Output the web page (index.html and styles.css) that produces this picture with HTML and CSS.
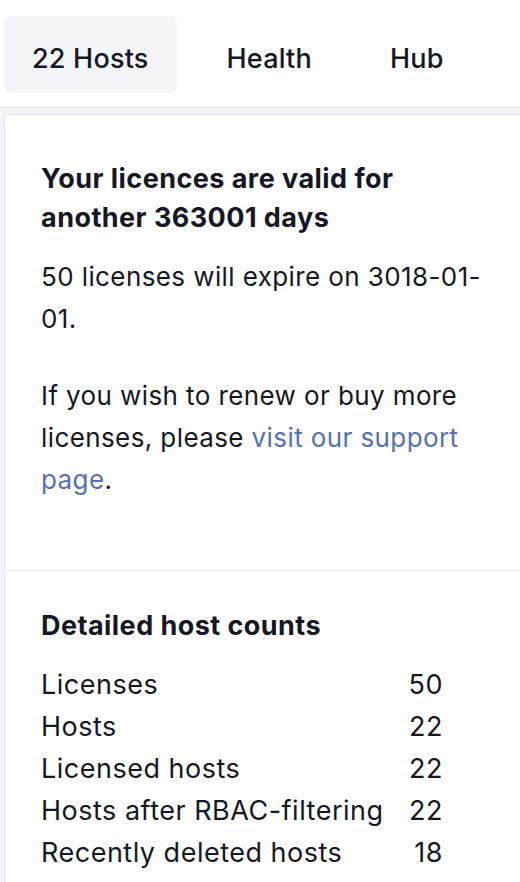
FILE: index.html
```html
<!DOCTYPE html>
<html lang="en">
<head>
<meta charset="utf-8">
<title>Licences</title>
<link rel="stylesheet" href="styles.css">
</head>
<body>
<nav class="tabs">
  <div class="tab active">22 Hosts</div>
  <div class="tab">Health</div>
  <div class="tab">Hub</div>
</nav>
<main class="content">
  <section class="card">
    <div class="card-section">
      <h2 class="title">Your licences are valid for another 363001 days</h2>
      <p class="text">50 licenses will expire on 3018-01-01.</p>
      <p class="text">If you wish to renew or buy more licenses, please <a class="link" href="#">visit our support page</a>.</p>
    </div>
    <div class="card-section second">
      <h2 class="title">Detailed host counts</h2>
      <div class="counts">
        <span class="label">Licenses</span><span class="num">50</span>
        <span class="label">Hosts</span><span class="num">22</span>
        <span class="label">Licensed hosts</span><span class="num">22</span>
        <span class="label">Hosts after RBAC-filtering</span><span class="num">22</span>
        <span class="label">Recently deleted hosts</span><span class="num">18</span>
      </div>
    </div>
  </section>
</main>
</body>
</html>
```
FILE: styles.css
```css
html, body {
  margin: 0;
  padding: 0;
}
body {
  font-family: Inter, "Noto Sans", sans-serif;
  color: #151824;
  background: #f3f4f8;
  width: 520px;
  height: 882px;
  overflow: hidden;
  display: flex;
  flex-direction: column;
}
.tabs {
  display: flex;
  gap: 22px;
  background: #ffffff;
  padding: 16px 0 14px 4px;
  border-bottom: 1px solid #e4e6ed;
}
.tab {
  padding: 28px 28px 19px 28px;
  font-size: 27px;
  line-height: 30px;
  letter-spacing: 0.2px;
  font-weight: 500;
  border-radius: 7px;
}
.tab.active {
  background: #f3f5f9;
}
.content {
  flex: 1;
  display: flex;
  flex-direction: column;
  padding: 6px 0 0 4px;
  min-height: 0;
}
.card {
  flex: 1;
  background: #ffffff;
  border: 1px solid #e4e6ed;
  border-right: none;
  border-bottom: none;
}
.card-section {
  padding: 44px 30px 34px 36px;
}
.card-section.second {
  border-top: 1px solid #eaebef;
  padding-top: 35px;
  padding-bottom: 0;
}
.title {
  margin: 0 0 19px 0;
  font-size: 27px;
  line-height: 39px;
  letter-spacing: 0.45px;
  font-weight: 700;
}
.text {
  margin: 0 0 35px 0;
  font-size: 26px;
  line-height: 42px;
  letter-spacing: 0.4px;
  font-weight: 400;
}
.link {
  color: #5570b6;
  text-decoration: none;
}
.counts {
  display: grid;
  grid-template-columns: 348px 54px;
  margin-top: 1px;
  font-size: 27px;
  line-height: 42px;
  letter-spacing: 0.5px;
}
.num {
  text-align: right;
}
```
